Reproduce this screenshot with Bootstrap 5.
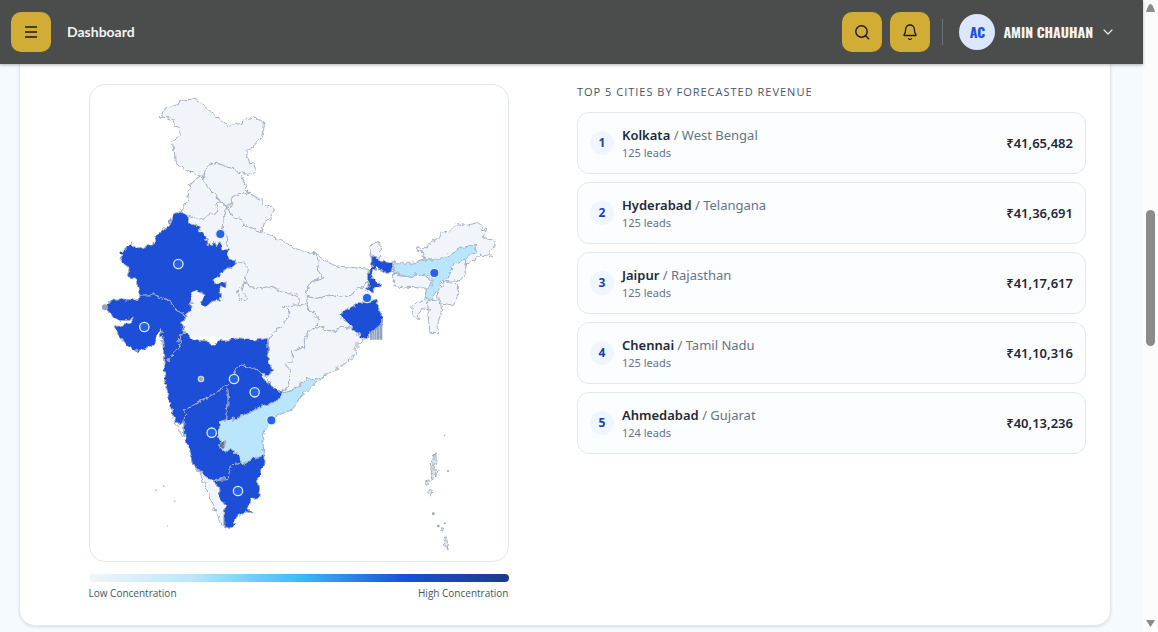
<!DOCTYPE html>
<html lang="en">
<head>
<meta charset="utf-8">
<meta name="viewport" content="width=device-width, initial-scale=1">
<title>Dashboard</title>
<link rel="stylesheet" href="https://cdn.jsdelivr.net/npm/bootstrap@5.3.0/dist/css/bootstrap.min.css">
<style>
  body { font-family: "Noto Sans", sans-serif; background: #f5faff; color: #1e293b; }
  .topbar { height: 64px; background: #4b4d4c; padding: 0 28px 0 11px; box-shadow: 0 1px 3px rgba(0,0,0,.3); }
  .page-name { font: 700 14px/20px Lato, "Noto Sans", sans-serif; color: #f4f4f4; }
  .gold-btn { width: 40px; height: 40px; border-radius: 10px; background: #d1ad36; color: #1c1a10; }
  .gold-btn:hover { background: #c19e2b; }
  .topbar-rule { width: 1px; height: 26px; background: #64748b; margin: 0 8px 0 4px; }
  .initials { width: 36px; height: 36px; background: #dbe7fe; color: #1d4ed8; }
  .narrow-type { font-family: "Oswald", "Liberation Sans Narrow", "Open Sans Condensed", "Liberation Sans", sans-serif; font-weight: 700; font-size: 14px; line-height: 20px; }
  .user-name { color: #f4f4f4; }
  .page-body { padding: 0 32px 5px 19px; }
  .panel { background: #fff; border: 1px solid #e2e8f0; border-top: 0; border-radius: 0 0 16px 16px; padding: 20px 24px 24px; box-shadow: 0 1px 3px rgba(15,23,42,.12); }
  .map-box { max-width: 420px; }
  .map-frame { border: 1px solid #e2e8f0; border-radius: 16px; }
  .legend-bar { height: 8px; border-radius: 4px; margin-top: 12px; background: linear-gradient(90deg, #f1f5f9, #bae6fd 25%, #38bdf8 50%, #1d4ed8 75%, #1e3a8a); }
  .legend-text { font-family: "Open Sans", sans-serif; font-size: 10px; line-height: 14px; color: #475569; padding: 4px 0 1px; }
  .list-title { font-family: "Open Sans", sans-serif; font-size: 11px; line-height: 16px; font-weight: 400; letter-spacing: 1px; color: #475569; margin-bottom: 12px; }
  .city { height: 62px; border: 1px solid #e2e8f0; border-radius: 12px; background: #fcfdff; padding: 0 12px; }
  .rank { width: 24px; height: 24px; background: #eff6ff; color: #1e40af; font-size: 12px; font-weight: 700; }
  .city-name { font-size: 13px; line-height: 20px; color: #64748b; }
  .city-name strong { color: #1e293b; font-weight: 600; }
  .city-leads { font-size: 11px; line-height: 16px; color: #64748b; }
  .amount { font-size: 13px; line-height: 18px; font-weight: 600; }
  .scroll-rail { width: 15px; background: #fcfcfc; }
  .scroll-thumb { width: 9px; height: 136px; border-radius: 5px; background: #8b8b8b; }
  .track-above { flex: 42 1 0; }
  .track-below { flex: 58 1 0; }
</style>
</head>
<body>
<div class="d-flex min-vh-100">
  <div class="flex-grow-1">
    <header class="topbar sticky-top d-flex align-items-center">
      <button class="gold-btn btn border-0 p-0 d-flex align-items-center justify-content-center me-3" type="button" aria-label="Menu">
        <svg width="18" height="18" viewBox="0 0 18 18" fill="none" stroke="currentColor" stroke-width="1.5"><path d="M3 4h12M3 9h12M3 14h12"/></svg>
      </button>
      <span class="page-name">Dashboard</span>
      <div class="d-flex align-items-center gap-2 ms-auto">
        <button class="gold-btn btn border-0 p-0 d-flex align-items-center justify-content-center" type="button" aria-label="Search">
          <svg width="18" height="18" viewBox="0 0 18 18" fill="none" stroke="currentColor" stroke-width="1.4" stroke-linecap="round"><circle cx="8.5" cy="8.5" r="5.7"/><path d="m12.7 12.7 3 3"/></svg>
        </button>
        <button class="gold-btn btn border-0 p-0 d-flex align-items-center justify-content-center" type="button" aria-label="Notifications">
          <svg width="18" height="18" viewBox="0 0 18 18" fill="none" stroke="currentColor" stroke-width="1.3" stroke-linecap="round" stroke-linejoin="round"><path d="M4.6 6.4a4.4 4.4 0 0 1 8.8 0c0 3.400.8 4.400 1.500 5.200.3.4.1.9-.4.9h-11c-.5 0-.7-.5-.4-.9.7-.8 1.500-1.800 1.500-5.200zM7.700 15.800c.6.7 2 .7 2.600 0"/></svg>
        </button>
        <div class="topbar-rule"></div>
        <button class="btn border-0 p-0 d-flex align-items-center gap-2" type="button">
          <span class="initials narrow-type rounded-circle d-flex align-items-center justify-content-center">AC</span>
          <span class="user-name narrow-type">AMIN CHAUHAN</span>
          <svg width="14" height="14" viewBox="0 0 14 14" fill="none" stroke="#e5e5e5" stroke-width="1.2" stroke-linecap="round" stroke-linejoin="round"><path d="m3 5 4 4 4-4"/></svg>
        </button>
      </div>
    </header>

    <main class="page-body">
      <section class="panel">
        <div class="row g-4 mt-0">
          <div class="col-6 mt-0">
            <div class="map-box mx-auto">
              <div class="map-frame">
                <svg class="d-block w-100" viewBox="0 0 1254 1428" role="img" aria-label="Map of India by lead concentration">
                  <defs>
                    <filter id="coast" x="0" y="0" width="1254" height="1428" filterUnits="userSpaceOnUse" color-interpolation-filters="sRGB">
                      <feTurbulence type="fractalNoise" baseFrequency=".06" numOctaves="2" seed="4" result="n"/>
                      <feDisplacementMap in="SourceGraphic" in2="n" scale="20" xChannelSelector="R" yChannelSelector="G"/>
                    </filter>
                  </defs>
                  <g filter="url(#coast)" stroke="#a3aec2" stroke-width="3" stroke-linejoin="round" fill="#f1f5f9">
                    <!-- central belt -->
                    <path stroke="none" d="M268 382 400 362 516 440 570 465 625 493 660 505 705 525 740 543 785 547 835 553 830 625 750 690 800 750 801 786 705 870 578 925 530 880 535 763 280 750 290 695 305 625 372 585 415 525 352 470 295 410z"/>
                    <!-- north -->
                    <path d="M214 97 218 80 236 64 262 56 268 50 300 40 324 46 345 66 375 88 388 104 416 122 455 115 462 104 478 104 484 96 506 103 523 118 520 140 510 165 495 172 494 188 472 194 470 218 476 235 490 236 497 258 476 271 462 264 445 262 430 250 412 247 400 238 378 232 350 244 346 262 334 274 300 262 280 252 256 240 254 210 247 170 262 160 274 148 270 130 258 122 252 105 232 98z"/>
                    <path d="M346 262 352 244 378 232 400 238 412 247 430 250 445 262 458 275 468 298 466 322 440 328 425 340 420 364 400 360 386 348 376 325 360 318 350 300 338 285z"/>
                    <path d="M334 274 338 285 350 300 360 318 376 325 388 350 378 372 380 384 362 388 350 396 325 404 316 396 292 390 268 382 280 362 298 345 294 322 300 296z"/>
                    <path d="M466 322 478 318 488 334 515 346 530 362 553 372 538 400 524 410 516 440 490 434 465 420 452 404 430 398 418 375 426 360 420 340 440 328z"/>
                    <path fill="none" d="M388 350 414 366 402 395 396 430 408 445 412 480 415 525"/>
                    <!-- Uttar Pradesh -->
                    <path d="M414 366 418 375 430 398 452 404 465 420 490 434 516 440 570 465 625 493 660 505 675 503 688 530 682 555 700 577 665 590 652 610 656 637 642 660 625 659 624 637 605 625 570 620 545 607 515 611 480 605 464 593 442 615 450 643 466 647 472 637 458 620 462 603 475 550 465 535 430 530 415 525 412 480 408 445 396 430 402 395z"/>
                    <!-- Bihar, Jharkhand, Chhattisgarh, Odisha -->
                    <path d="M675 503 705 525 740 543 785 547 835 553 832 590 820 603 800 610 785 630 750 637 720 630 685 640 652 635 652 610 665 590 700 577 682 555 688 530z"/>
                    <path d="M652 635 685 640 720 630 750 637 785 630 800 610 830 610 830 640 800 665 750 690 765 700 785 730 745 727 740 742 720 740 680 725 688 705 665 680 652 660z"/>
                    <path d="M652 660 665 680 688 705 678 725 655 740 640 785 610 795 610 830 588 833 602 865 595 895 575 925 552 920 530 880 545 855 535 825 535 770 550 740 580 720 600 683 580 665 625 659z"/>
                    <path d="M680 725 720 740 740 742 745 727 785 730 805 750 830 762 801 775 801 786 795 810 760 840 705 870 670 885 655 875 635 895 610 915 578 925 595 895 602 865 588 833 610 830 610 795 640 785 655 740z"/>
                    <path d="M840 515 845 480 870 472 872 520z"/>
                    <!-- north-east -->
                    <path d="M983 485 1005 493 1020 475 1045 460 1055 445 1080 440 1105 415 1125 422 1165 413 1185 435 1180 455 1215 467 1215 485 1198 495 1205 515 1170 510 1130 540 1130 517 1050 525 1002 525 998 500 983 500z"/>
                    <path d="M910 570 950 575 995 567 1025 590 1015 610 940 606 910 600z"/>
                    <path d="M1130 517 1125 565 1110 587 1055 590 1078 570 1090 540z"/>
                    <path d="M1065 590 1105 597 1105 625 1090 660 1045 653 1042 620z"/>
                    <path d="M1012 647 1050 645 1055 675 1045 710 1042 743 1020 743 1015 695z"/>
                    <path d="M1010 640 985 650 965 665 970 690 985 705 995 670 1015 675z"/>
                    <path fill="#bae6fd" d="M910 533 965 535 1005 525 1050 525 1075 510 1110 490 1155 478 1160 500 1130 517 1090 540 1078 570 1055 590 1038 620 1020 647 1008 640 1012 610 1030 590 1015 575 995 567 950 575 915 565z"/>
                    <!-- Kerala, Goa -->
                    <path d="M310 1140 335 1165 370 1187 385 1210 390 1240 405 1265 402 1295 402 1325 375 1280 355 1225 330 1165z"/>
                    <path d="M255 1015 282 1015 280 1055 268 1040z"/>
                    <!-- high concentration states -->
                    <g fill="#1d4ed8">
                      <path d="M262 383 290 390 295 413 325 420 332 440 350 465 352 483 360 470 366 482 372 470 380 482 390 475 395 490 412 495 415 525 440 532 400 560 372 585 378 595 405 592 405 608 390 610 392 645 365 650 345 663 333 650 345 627 320 615 305 625 303 665 290 695 260 675 235 645 195 630 150 630 135 580 112 575 118 545 92 533 95 505 122 475 140 490 185 480 205 445 235 420 250 387z"/>
                      <path d="M150 630 195 630 235 645 260 675 290 695 275 710 285 745 265 755 270 785 250 810 235 830 222 820 218 765 210 730 205 745 185 785 140 800 115 785 85 750 70 727 120 715 130 697 105 707 75 705 50 670 60 645 110 645 148 640z"/>
                      <path d="M285 745 310 763 352 768 360 782 372 778 390 765 415 768 440 758 500 765 533 760 535 825 545 855 530 880 510 857 447 838 432 872 412 900 375 925 320 955 285 975 282 1015 258 1015 240 965 228 895 220 815 235 830 250 810 270 785 265 755z"/>
                      <path d="M447 838 510 857 525 890 578 925 560 950 510 965 480 983 445 1000 395 1007 410 1003 415 935 412 900 432 872z"/>
                      <path d="M412 900 415 935 410 1003 395 1007 385 1045 392 1070 390 1093 415 1095 448 1105 455 1135 422 1140 415 1180 370 1187 335 1165 310 1140 302 1105 285 1060 282 1015 285 975 320 955 375 925z"/>
                      <path d="M370 1187 415 1180 422 1140 455 1135 490 1120 525 1110 525 1135 502 1175 508 1237 485 1243 470 1270 492 1285 470 1280 442 1293 435 1315 415 1330 402 1325 402 1295 405 1265 390 1240 385 1210z"/>
                      <path d="M845 512 870 525 910 537 908 560 890 565 860 547 845 565 850 580 875 600 850 610 850 625 833 615 835 590 832 565 845 550z"/>
                      <path d="M820 650 860 643 865 665 875 695 875 720 840 745 825 760 795 745 785 725 765 705 745 692 765 675 800 660z"/>
                    </g>
                    <path fill="#bae6fd" d="M705 870 660 910 630 935 605 975 565 990 530 1020 518 1055 522 1110 490 1120 455 1140 448 1105 415 1095 390 1093 392 1070 385 1045 395 1007 445 1000 480 983 510 965 560 950 578 925 610 915 635 895 655 875 670 885z"/>
                    <path d="m385 1078 18-8 2 14-14 6z" fill="#64748b"/>
                    <!-- islands -->
                    <path fill="#dbe3ee" d="m1036 1105 3 17-7 27 4 20-10 20-2-22 4-40zM1038 1165l7-10-5 24zM1015 1184l-8 8 8 8 6-10zM1018 1214l7 2 3 12-6 7-6-6zM1062 1363l6-8 8 23-4 12-8-10zM1055 1325l9 3-8 10z"/>
                  </g>
                  <g fill="#94a3b8">
                    <path d="M840 764v-20l6-4v24zM847 764v-26l6-5v31zM854 764v-32l6-6v38zM861 764v-38l6-5v43zM868 764v-44l9-6v50z"/>
                    <circle cx="45" cy="667" r="9"/><circle cx="140" cy="796" r="5"/><circle cx="235" cy="824" r="5"/>
                    <circle cx="1030" cy="1286" r="4"/><circle cx="1045" cy="1323" r="4"/><circle cx="1064" cy="1315" r="3"/>
                    <circle cx="1074" cy="1158" r="3"/><circle cx="1009" cy="1188" r="3"/><circle cx="1064" cy="1051" r="2"/>
                    <g opacity=".6"><circle cx="198" cy="1216" r="3"/><circle cx="221" cy="1203" r="3"/><circle cx="254" cy="1249" r="3"/><circle cx="232" cy="1323" r="2"/></g>
                  </g>
                  <g fill="#2563eb" stroke="#dbeafe" stroke-width="4">
                    <circle cx="265" cy="537" r="14"/><circle cx="163" cy="726" r="14"/><circle cx="432" cy="882" r="14"/><circle cx="494" cy="922" r="14"/>
                    <circle cx="365" cy="1043" r="14"/><circle cx="444" cy="1218" r="14"/><circle cx="391" cy="447" r="14"/><circle cx="831" cy="639" r="14"/>
                    <circle cx="1033" cy="564" r="14"/><circle cx="544" cy="1006" r="14"/>
                    <circle cx="333" cy="882" r="8" fill="#94a3b8" stroke="#cbd5e1"/>
                  </g>
                </svg>
              </div>
              <div class="legend-bar"></div>
              <div class="legend-text d-flex justify-content-between"><span>Low Concentration</span><span>High Concentration</span></div>
            </div>
          </div>
          <div class="col-6 mt-0">
            <h2 class="list-title text-uppercase">Top 5 cities by forecasted revenue</h2>
            <ol class="list-unstyled d-flex flex-column gap-2 mb-0">
              <li class="city d-flex align-items-center gap-2"><span class="rank rounded-circle d-flex align-items-center justify-content-center">1</span><div class="flex-grow-1"><div class="city-name"><strong>Kolkata</strong> / West Bengal</div><div class="city-leads">125 leads</div></div><span class="amount">₹41,65,482</span></li>
              <li class="city d-flex align-items-center gap-2"><span class="rank rounded-circle d-flex align-items-center justify-content-center">2</span><div class="flex-grow-1"><div class="city-name"><strong>Hyderabad</strong> / Telangana</div><div class="city-leads">125 leads</div></div><span class="amount">₹41,36,691</span></li>
              <li class="city d-flex align-items-center gap-2"><span class="rank rounded-circle d-flex align-items-center justify-content-center">3</span><div class="flex-grow-1"><div class="city-name"><strong>Jaipur</strong> / Rajasthan</div><div class="city-leads">125 leads</div></div><span class="amount">₹41,17,617</span></li>
              <li class="city d-flex align-items-center gap-2"><span class="rank rounded-circle d-flex align-items-center justify-content-center">4</span><div class="flex-grow-1"><div class="city-name"><strong>Chennai</strong> / Tamil Nadu</div><div class="city-leads">125 leads</div></div><span class="amount">₹41,10,316</span></li>
              <li class="city d-flex align-items-center gap-2"><span class="rank rounded-circle d-flex align-items-center justify-content-center">5</span><div class="flex-grow-1"><div class="city-name"><strong>Ahmedabad</strong> / Gujarat</div><div class="city-leads">124 leads</div></div><span class="amount">₹40,13,236</span></li>
            </ol>
          </div>
        </div>
      </section>
    </main>
  </div>
  <div class="scroll-rail flex-shrink-0 d-flex flex-column align-items-center py-1" aria-hidden="true">
    <svg width="9" height="8" viewBox="0 0 9 8"><path d="M0 8q4.500-16 9 0z" fill="#8b8b8b"/></svg>
    <div class="track-above"></div>
    <div class="scroll-thumb"></div>
    <div class="track-below"></div>
    <svg width="9" height="8" viewBox="0 0 9 8"><path d="M0 0h9L4.500 7z" fill="#8b8b8b"/></svg>
  </div>
</div>
<script src="https://cdn.jsdelivr.net/npm/bootstrap@5.3.0/dist/js/bootstrap.bundle.min.js"></script>
</body>
</html>
